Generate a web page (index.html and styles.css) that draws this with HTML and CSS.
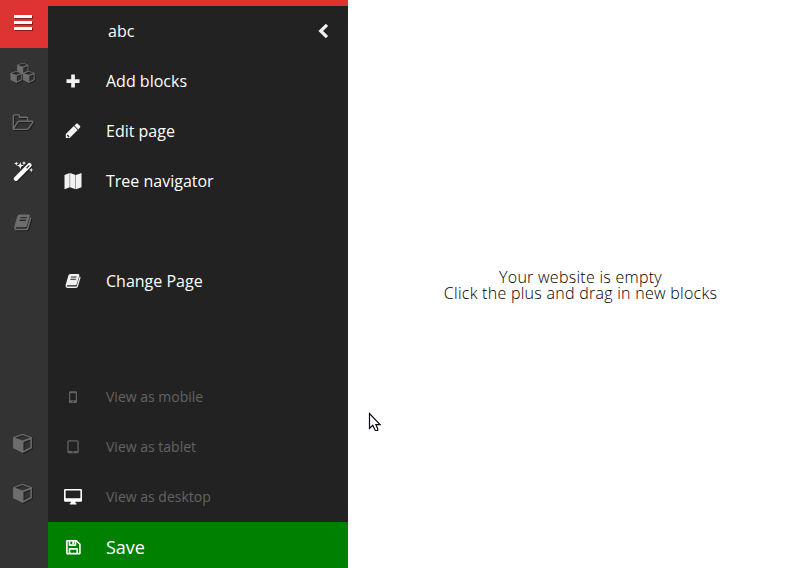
FILE: index.html
```html
<!DOCTYPE html>
<html lang="en">
<head>
<meta charset="utf-8">
<title>Page editor</title>
<link rel="stylesheet" href="styles.css">
</head>
<body>
<svg class="defs" width="0" height="0">
  <symbol id="cube" viewBox="0 0 20 20">
    <path fill="currentColor" fill-rule="evenodd" d="M10 .3 L19.4 3.7 V14.8 L10 19.6 L.6 14.8 V3.7Z M2.4 4.2 L10 7 L17.6 4.2 L10 1.6Z M11 8.6 V17.3 L17.9 13.8 V6.1Z"/>
  </symbol>
  <symbol id="book" viewBox="0 0 20 18">
    <path fill="currentColor" fill-rule="evenodd" d="M6.2 .6 H15.6 Q17.3 .6 16.8 2.4 L13.8 12.5 Q13.4 13.8 12 13.8 H3.2 Q2 13.8 2.1 14.7 Q2.3 15.3 3.2 15.3 H12.7 Q13.5 15.3 13.8 14.5 L17.2 3.3 Q18.7 3.8 18.2 5.2 L15.3 15 Q14.7 16.9 13 16.9 H3.2 Q.4 16.7 .7 13.4 L4 2.3 Q4.5 .8 6.2 .6Z M7.2 3.4 L6.9 4.5 H13.5 L13.8 3.4Z M6.4 6.1 L6.1 7.2 H12.7 L13 6.1Z"/>
  </symbol>
</svg>
<div class="app">
  <nav class="rail">
    <a class="rail-item menu"><svg class="icon" viewBox="0 0 24 24"><path fill="currentColor" d="M3 3h18v3H3zM3 9h18v3H3zM3 15h18v3H3z"/></svg></a>
    <a class="rail-item"><svg class="icon" viewBox="0 0 24 24"><use href="#cube" x="5.5" y="1.5" width="12.5" height="12"/><use href="#cube" x="-1.2" y="9.7" width="13" height="12.5"/><use href="#cube" x="11.3" y="9.7" width="13" height="12.5"/></svg></a>
    <a class="rail-item"><svg class="icon" viewBox="0 0 24 24"><path fill="none" stroke="currentColor" stroke-width="1.4" stroke-linejoin="round" d="M2.3 17.8V5.2Q2.4 3.9 3.6 3.9H7.4Q8.5 4 8.5 5.2V6.3H15.4Q16.6 6.4 16.6 7.6V10.2M2.3 17.8L6.7 11.2Q7.4 10.2 8.6 10.2H21Q22.5 10.3 21.6 11.6L17.8 17Q17 18.4 15.4 18.4H3.3Q2.4 18.4 2.3 17.8Z"/></svg></a>
    <a class="rail-item active"><svg class="icon" viewBox="0 0 24 24"><path fill="none" stroke="currentColor" stroke-width="4.4" stroke-linecap="round" d="M5 17.8L18.4 4.2"/><path stroke="#333" stroke-width="1.3" d="M15.6 7.2L18.3 4.4"/><path fill="currentColor" d="M9.3 1l.9 2.7 2.7.9-2.7.9-.9 2.7-.9-2.7-2.7-.9 2.7-.9zM5.3 .4l.6 1.6 1.6.6-1.6.6-.6 1.6-.6-1.6-1.6-.6 1.6-.6zM13 0l.6 1.5 1.5.6-1.5.6L13 4.2l-.6-1.5-1.5-.6 1.5-.6zM20.2 6.8l.6 1.6 1.6.6-1.6.6-.6 1.6-.6-1.6-1.6-.6 1.6-.6z"/></svg></a>
    <a class="rail-item"><svg class="icon" viewBox="0 0 24 24"><use href="#book" x="2.5" y="2.4" width="19.5" height="18.5"/></svg></a>
    <span class="spacer"></span>
    <a class="rail-item"><svg class="icon" viewBox="0 0 24 24"><use href="#cube" x="1.5" y="2.5" width="20" height="20"/></svg></a>
    <a class="rail-item"><svg class="icon" viewBox="0 0 24 24"><use href="#cube" x="1.5" y="2.5" width="20" height="20"/></svg></a>
  </nav>
  <aside class="panel">
    <header class="row title"><span class="name">abc</span><svg class="icon" viewBox="0 0 24 24"><path fill="none" stroke="currentColor" stroke-width="3.2" d="M16 5.8L9.7 12L16 18.2"/></svg></header>
    <a class="row"><svg class="icon" viewBox="0 0 24 24"><path fill="currentColor" d="M10.2 5.5h3.7v4.7h4.6v3.7h-4.6v4.6h-3.7v-4.6H5.5v-3.7h4.7z"/></svg><span>Add blocks</span></a>
    <a class="row"><svg class="icon" viewBox="0 0 24 24"><path fill="currentColor" fill-rule="evenodd" d="M4.8 19V15.1L12.8 7.1L16.7 11L8.7 19Z M6 16.3v.9h1v1h.8l.7-.7-1.8-1.9z M13.4 6.5L15.2 4.7Q16 4.1 16.8 4.7L19 6.9Q19.7 7.7 19 8.6L17.3 10.4Z"/></svg><span>Edit page</span></a>
    <a class="row"><svg class="icon" viewBox="0 0 24 24"><path fill="currentColor" d="M3.5 6L8.7 4v14.2L3.5 20.3zM9.1 4L14.6 6v14.3L9.1 18.2zM15 6L20.5 4v14.2L15 20.3z"/></svg><span>Tree navigator</span></a>
    <a class="row change"><svg class="icon" viewBox="0 0 24 24"><use href="#book" x="4" y="4.5" width="17" height="15.5"/></svg><span>Change Page</span></a>
    <span class="spacer"></span>
    <a class="row view"><svg class="icon" viewBox="0 0 24 24"><path fill="currentColor" fill-rule="evenodd" d="M9 7.3h6q1 0 1 1v9.8q0 1-1 1H9q-1 0-1-1V8.3q0-1 1-1zM9.2 9.3v7h5.6v-7zM11.3 17.3v1h1.4v-1z"/></svg><span>View as mobile</span></a>
    <a class="row view"><svg class="icon" viewBox="0 0 24 24"><path fill="currentColor" fill-rule="evenodd" d="M7.8 6.2h8.4q1.5 0 1.5 1.5v10.2q0 1.4-1.5 1.4H7.8q-1.5 0-1.5-1.4V7.7q0-1.5 1.5-1.5zM7.6 7.4v9.5h8.8V7.4zM11.3 17.6v.9h1.4v-.9z"/></svg><span>View as tablet</span></a>
    <a class="row view selected"><svg class="icon" viewBox="0 0 24 24"><path fill="currentColor" fill-rule="evenodd" d="M4.3 5h15.5q1.2 0 1.2 1.2v10.4q0 1.2-1.2 1.2H14.5V19.3h1v1.3H8.8v-1.3h1V17.8H4.3Q3 17.8 3 16.6V6.2Q3 5 4.3 5zM4.6 6.5v7.7h14.8V6.5z"/></svg><span>View as desktop</span></a>
    <a class="row save"><svg class="icon" viewBox="0 0 24 24"><path fill="none" stroke="currentColor" stroke-width="1.6" stroke-linejoin="round" d="M5.9 5.7H15.3L18.9 9.3V18.6H5.9ZM8.5 18.6V13.9H16.2V18.6M8.5 5.7V10.1H14.5V5.7"/><path fill="currentColor" d="M11.3 6h1.9v3h-1.9z"/></svg><span>Save</span></a>
  </aside>
  <main class="canvas">
    <p>Your website is empty<br>Click the plus and drag in new blocks</p>
    <svg class="cursor" viewBox="0 0 13 20"><path fill="#fff" stroke="#090914" stroke-width="1.2" d="M1.5 1.6V16.4L4.8 13.2L7.3 18.5H9.7V16.7L7.9 12.6H12.1Z"/></svg>
  </main>
</div>
</body>
</html>
```

FILE: styles.css
```css
* { box-sizing: border-box; }

body {
  margin: 0;
  background: #fff;
  font-family: "Open Sans", sans-serif;
  font-size: 16px;
  overflow: hidden;
}

.defs { display: block; }

.app {
  display: flex;
  height: 568px;
}

.icon {
  flex: none;
  width: 24px;
  height: 24px;
  overflow: visible;
}

.spacer { flex: 1; }

.rail {
  display: flex;
  flex-direction: column;
  width: 48px;
  padding-bottom: 50px;
  background: #333;
  color: #6d6d6d;
}

.rail-item {
  flex: none;
  height: 50px;
  padding: 13px 0 0 11px;
}

.rail-item .icon {
  display: block;
  filter: drop-shadow(1px 1px 0 rgba(0, 0, 0, 0.4));
}

.rail-item.menu {
  height: 48px;
  padding-top: 12px;
  background: #dd3333;
  color: #fff;
}

.active { color: #fff; }

.panel {
  display: flex;
  flex-direction: column;
  width: 300px;
  border-top: 6px solid #dd3333;
  background: #222;
  color: #fff;
}

.row {
  display: flex;
  flex: none;
  align-items: center;
  gap: 21px;
  height: 50px;
  padding-left: 13px;
}

.row .icon { color: #f2f2f2; }

.title {
  justify-content: space-between;
  padding: 0 13px 0 60px;
}

.change { margin-top: 50px; }

.view,
.view .icon {
  color: #636363;
}

.view {
  padding-bottom: 2px;
  font-size: 14px;
}

.selected .icon { color: #fff; }

.save {
  height: 46px;
  padding-top: 4px;
  background: #008000;
  font-size: 18px;
}

.save .icon { color: #fff; }

.canvas {
  position: relative;
  display: flex;
  flex: 1;
  align-items: center;
  justify-content: center;
  padding: 2px 0 0 4px;
  color: #000;
}

.canvas p {
  margin: 0;
  font-weight: 300;
  line-height: 16px;
  letter-spacing: 0.27px;
  text-align: center;
}

.cursor {
  position: absolute;
  top: 412px;
  left: 20px;
  width: 13px;
  height: 20px;
}
```
